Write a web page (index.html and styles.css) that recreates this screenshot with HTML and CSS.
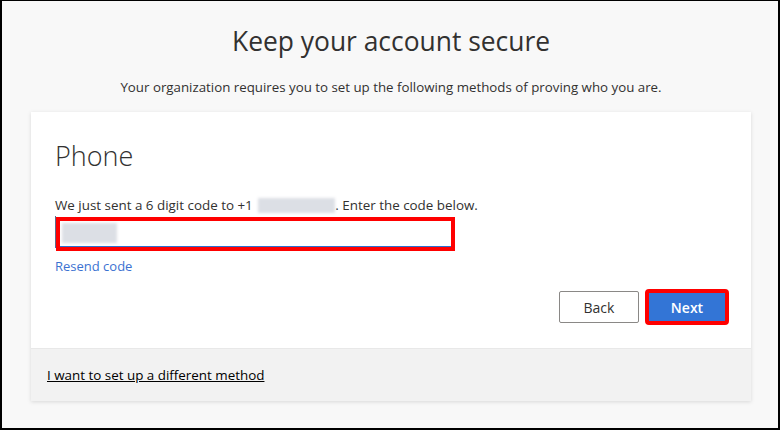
FILE: index.html
```html
<!DOCTYPE html>
<html lang="en">
  <head>
    <meta charset="UTF-8" />
    <meta name="viewport" content="width=device-width, initial-scale=1.0" />
    <title>Keep your account secure</title>
    <link rel="stylesheet" href="styles.css">
  </head>

  <body>
    <div class="frame">
      <div class="page">
        <h1 class="title">Keep your account secure</h1>
        <p class="lead">Your organization requires you to set up the following methods of proving who you are.</p>

        <div class="card">
          <div class="card-body">
            <h2 class="method">Phone</h2>
            <p class="hint">
              We just sent a 6 digit code to +1 <span class="redacted redacted-phone"></span>. Enter the code below.
            </p>

            <div class="field">
              <div class="code-input"><span class="redacted redacted-code"></span></div>
              <span class="highlight"></span>
            </div>

            <a class="resend" href="#">Resend code</a>

            <div class="actions">
              <button class="btn btn-back">Back</button>
              <button class="btn btn-next">Next</button>
            </div>
          </div>

          <div class="card-footer">
            <a class="other-method" href="#">I want to set up a different method</a>
          </div>
        </div>
      </div>
    </div>
  </body>
</html>
```

FILE: styles.css
```css
body {
  margin: 0;
  padding: 0;
  font-family: "Open Sans", "Noto Sans", sans-serif;
  color: #323130;
}

.frame {
  box-sizing: border-box;
  height: 430px;
  padding-left: 2px;
  background-color: #f8f8f8;
  border: solid #000;
  border-width: 1px 2px 2px 2px;
  overflow: hidden;
}

.page {
  width: 720px;
  margin: 0 auto;
}

.title {
  margin: 22px 0 0;
  font-size: 26.4px;
  font-weight: 400;
  line-height: 36px;
  text-align: center;
  color: #323130;
}

.lead {
  margin: 18px 0 0;
  font-size: 13.3px;
  line-height: 20px;
  text-align: center;
}

.card {
  margin-top: 15px;
  background-color: #fff;
  box-shadow: 0 1px 4px rgba(0, 0, 0, 0.13);
}

.card-body {
  height: 236px;
  box-sizing: border-box;
  padding: 26px 24px 0;
  display: flex;
  flex-direction: column;
  align-items: flex-start;
}

.method {
  margin: 0;
  font-size: 27px;
  font-weight: 300;
  line-height: 36px;
}

.hint {
  margin: 22px 0 0;
  font-size: 13.4px;
  line-height: 18px;
  white-space: nowrap;
}

.redacted {
  display: inline-block;
  background-color: #dcdfe5;
  filter: blur(1.5px);
}

.redacted-phone {
  width: 77px;
  height: 15px;
  vertical-align: -3px;
  margin-left: 2px;
}

.field {
  position: relative;
  margin-top: 2px;
}

.code-input {
  box-sizing: border-box;
  width: 396px;
  height: 32px;
  padding: 7px 6px 0;
  border-left: 1px solid #5a6b8c;
  border-bottom: 2px solid #2b6fcf;
}

.redacted-code {
  width: 55px;
  height: 20px;
}

/* red annotation drawn over the code box */
.highlight {
  position: absolute;
  left: 1px;
  top: 1px;
  width: 399px;
  height: 34px;
  box-sizing: border-box;
  border: 4px solid #f00;
}

.resend {
  margin-top: 9px;
  font-size: 13px;
  line-height: 18px;
  color: #3b72d1;
  text-decoration: none;
}

.actions {
  align-self: stretch;
  display: flex;
  justify-content: flex-end;
  gap: 8px;
  margin-top: 16px;
}

.btn {
  width: 80px;
  height: 32px;
  border-radius: 2px;
  font-family: inherit;
  font-size: 14px;
  cursor: pointer;
}

.btn-back {
  background-color: #fff;
  border: 1px solid #8a8886;
  color: #323130;
}

.btn-next {
  background-color: #3375d6;
  border: 1px solid #3375d6;
  color: #fff;
  font-weight: 600;
  outline: 4px solid #f00;
  outline-offset: -2px;
}

.card-footer {
  height: 53px;
  box-sizing: border-box;
  padding: 0 16px;
  display: flex;
  align-items: center;
  background-color: #f2f2f2;
  border-top: 1px solid #e8e8e8;
}

.other-method {
  font-size: 13.4px;
  color: #000;
  text-decoration: underline;
}
```
